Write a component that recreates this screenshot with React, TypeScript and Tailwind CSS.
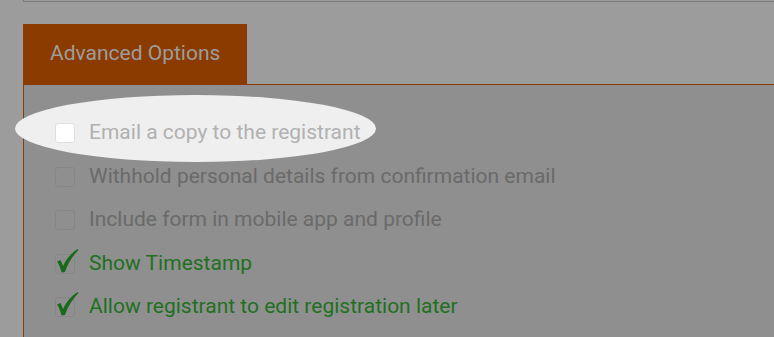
import React from "react";

const rows = [
  { label: "Email a copy to the registrant", state: "highlight" },
  { label: "Withhold personal details from confirmation email", state: "off" },
  { label: "Include form in mobile app and profile", state: "off" },
  { label: "Show Timestamp", state: "on" },
  { label: "Allow registrant to edit registration later", state: "on" },
];

function Check() {
  return (
    <svg className="absolute left-[-1px] top-[-7px]" width="26" height="28" viewBox="0 0 26 28">
      <path
        d="M2 13.5 L5.5 12 C6.5 14 7.3 16 8 18 C11 11 16 5.5 22.5 1 L23.5 2 C17.5 8 13 15 10 24 L6.5 24.5 C5.5 20 4 16.5 2 13.5 Z"
        fill="#1b6a1b"
      />
    </svg>
  );
}

export default function App() {
  return (
    <div className="relative w-[774px] h-[337px] overflow-hidden bg-[#9c9c9c]" style={{ fontFamily: "Roboto, 'Liberation Sans', sans-serif" }}>
      <div className="ml-[23px] h-[2px] border-l border-b border-[#7a7a7a]" />
      <div className="ml-[23px] mt-[22px]">
        <div className="w-[224px] h-[60px] bg-[#8b3a00] flex items-center pl-[27px] text-[21px] text-[#9d9d9d]">
          Advanced Options
        </div>
        <div className="h-[260px] bg-[#8f8f8f] border-t border-l border-[#8b3a00] pt-[38px] pl-[31px] flex flex-col gap-[23.5px]">
          {rows.map((r) => (
            <div key={r.label} className="relative flex items-center h-[20px] z-10">
              <div
                className={
                  "relative w-[20px] h-[20px] rounded-[3px] border shrink-0 " +
                  (r.state === "highlight" ? "bg-white border-[#e0e0e0]" : "bg-[#8f8f8f] border-[#868686]")
                }
              >
                {r.state === "on" && <Check />}
              </div>
              <span
                className={
                  "ml-[14px] text-[21px] whitespace-nowrap " +
                  (r.state === "highlight" ? "text-[#b1b1b1]" : r.state === "on" ? "text-[#1f701f]" : "text-[#6a6a6a]")
                }
              >
                {r.label}
              </span>
            </div>
          ))}
        </div>
      </div>
      <div className="absolute left-[15px] top-[95px] w-[361px] h-[67px] rounded-[50%] bg-[#efefef]" />
    </div>
  );
}
